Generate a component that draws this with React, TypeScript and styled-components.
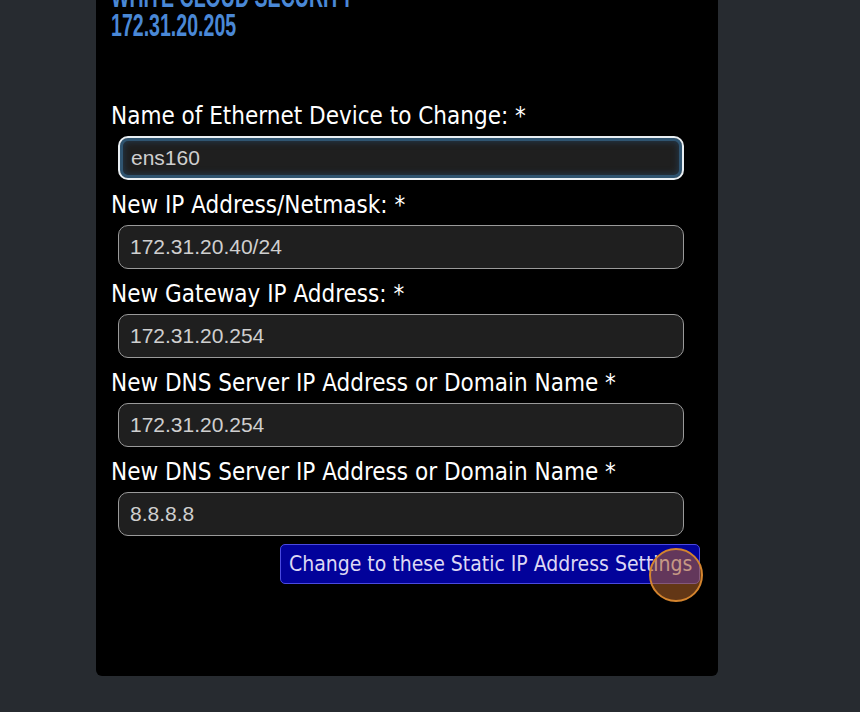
import React from "react";
import styled, { createGlobalStyle } from "styled-components";

const Global = createGlobalStyle`
  html, body { margin: 0; padding: 0; background: #272b30; }
  body { width: 860px; height: 712px; overflow: hidden; }
`;

const Page = styled.div`
  width: 860px;
  height: 712px;
  background: #272b30;
  display: flex;
  align-items: flex-start;
  padding-left: 96px;
  box-sizing: border-box;
`;

const Panel = styled.div`
  width: 622px;
  height: 694px;
  margin-top: -18px;
  background: #000;
  border-radius: 0 0 6px 6px;
  padding: 0 18px 0 15px;
  box-sizing: border-box;
  display: flex;
  flex-direction: column;
`;

const Brand = styled.div`
  display: flex;
  flex-direction: column;
  align-items: flex-start;
  margin-bottom: 63px;
`;

const BrandLine = styled.span`
  display: inline-block;
  font-family: "Liberation Sans", Arial, sans-serif;
  font-weight: 700;
  font-size: 29px;
  line-height: 29px;
  color: #4a88d6;
  transform: scale(0.675, 1.07);
  transform-origin: left center;
  white-space: nowrap;
`;

const Form = styled.form`
  display: flex;
  flex-direction: column;
`;

const Field = styled.div`
  display: flex;
  flex-direction: column;
  margin-bottom: 12px;
`;

const Label = styled.label`
  font-family: "DejaVu Sans Condensed", "DejaVu Sans", sans-serif;
  font-size: 24px;
  line-height: 27px;
  color: #fff;
  height: 33px;
  white-space: nowrap;
`;

const Input = styled.input<{ $focus?: boolean }>`
  width: 566px;
  height: 44px;
  margin-left: 7px;
  box-sizing: border-box;
  border-radius: 10px;
  background: #1f1f1f;
  border: ${(p) => (p.$focus ? "2px solid #e8eef2" : "1.5px solid #9a9a9a")};
  box-shadow: ${(p) =>
    p.$focus ? "inset 0 0 0 3px #2f5470, inset 0 0 6px 4px #24384a" : "none"};
  color: #cfcfcf;
  font-family: "Liberation Sans", Arial, sans-serif;
  font-size: 21px;
  padding: 0 0 0 11px;
  outline: none;
`;

const Actions = styled.div`
  display: flex;
  justify-content: flex-end;
  margin-top: -4px;
`;

const Button = styled.button`
  position: relative;
  height: 40px;
  width: 420px;
  box-sizing: border-box;
  background: #02029a;
  border: 1px solid #4a4ae0;
  border-radius: 5px;
  color: #ddd8f4;
  font-family: "DejaVu Sans Condensed", "DejaVu Sans", sans-serif;
  font-size: 21px;
  padding: 0 0 0 8px;
  text-align: left;
  white-space: nowrap;
`;

const Cursor = styled.span`
  position: absolute;
  left: 368px;
  top: 3px;
  width: 54px;
  height: 54px;
  border-radius: 50%;
  border: 2px solid #d4842e;
  background: rgba(180, 100, 40, 0.55);
  box-sizing: border-box;
  pointer-events: none;
`;

const fields = [
  { label: "Name of Ethernet Device to Change: *", value: "ens160", focus: true },
  { label: "New IP Address/Netmask: *", value: "172.31.20.40/24" },
  { label: "New Gateway IP Address: *", value: "172.31.20.254" },
  { label: "New DNS Server IP Address or Domain Name *", value: "172.31.20.254" },
  { label: "New DNS Server IP Address or Domain Name *", value: "8.8.8.8" },
];

export default function App() {
  return (
    <>
      <Global />
      <Page>
        <Panel>
          <Brand>
            <BrandLine>WHITE CLOUD SECURITY</BrandLine>
            <BrandLine>172.31.20.205</BrandLine>
          </Brand>
          <Form onSubmit={(e) => e.preventDefault()}>
            {fields.map((f, i) => (
              <Field key={i}>
                <Label>{f.label}</Label>
                <Input $focus={f.focus} defaultValue={f.value} readOnly />
              </Field>
            ))}
            <Actions>
              <Button type="button">
                Change to these Static IP Address Settings
                <Cursor />
              </Button>
            </Actions>
          </Form>
        </Panel>
      </Page>
    </>
  );
}
